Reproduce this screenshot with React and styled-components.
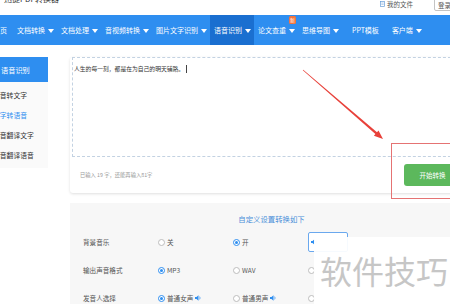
import React from 'react';
import styled, { createGlobalStyle } from 'styled-components';

const Global = createGlobalStyle`
  html, body { margin: 0; padding: 0; background: #fff; }
  body {
    width: 450px; height: 304px; overflow: hidden;
    font-family: "Noto Sans CJK SC", "Noto Sans", sans-serif;
  }
  * { box-sizing: border-box; }
`;

const Page = styled.div`
  position: relative;
  width: 450px;
  height: 304px;
  overflow: hidden;
  background: #fff;
`;

const TopBar = styled.header`
  height: 15px;
  display: flex;
  justify-content: space-between;
  align-items: flex-start;
`;

const Brand = styled.div`
  margin: -6px 0 0 4px;
  font-size: 8px;
  line-height: 10px;
  color: #333;
  white-space: nowrap;
`;

const TopRight = styled.div`
  display: flex;
  align-items: flex-start;
  gap: 21px;
  margin-right: -14px;
`;

const MyFiles = styled.div`
  display: flex;
  align-items: center;
  gap: 2px;
  font-size: 6.5px;
  line-height: 8px;
  color: #555;
  white-space: nowrap;
`;

const LoginBtn = styled.div`
  margin-top: -3px;
  width: 30px;
  height: 14px;
  border: 1px solid #c4c4c4;
  border-radius: 2px;
  font-size: 6.5px;
  line-height: 12px;
  padding-left: 3px;
  padding-top: 1px;
  color: #555;
  background: #fff;
`;

const Nav = styled.nav`
  height: 30px;
  background: #2e8ef0;
  margin-left: -11px;
  white-space: nowrap;
  font-size: 0;
`;

const NavItem = styled.span`
  position: relative;
  display: inline-block;
  vertical-align: top;
  height: 30px;
  padding: 0 ${p => p.$pr ?? 3}px 0 ${p => p.$pl ?? 4}px;
  font-size: 7px;
  line-height: 30px;
  color: #fff;
  background: ${p => (p.$active ? '#1a6fd0' : 'transparent')};
`;

const CaretIcon = styled.svg`
  display: inline-block;
  vertical-align: middle;
  margin-left: 3px;
`;

const Badge = styled.span`
  position: absolute;
  top: 1px;
  right: 2px;
  width: 7px;
  height: 8px;
  border-radius: 1.5px;
  background: #f4733a;
  color: #fff;
  font-size: 5px;
  line-height: 8px;
  text-align: center;
`;

const Body = styled.div`
  display: flex;
  align-items: flex-start;
  padding-top: 12px;
`;

const Sidebar = styled.aside`
  width: 48px;
  flex: none;
`;

const SideHead = styled.div`
  height: 25px;
  background: #2e8ef0;
  color: #fff;
  font-size: 7.2px;
  display: flex;
  align-items: center;
  padding-left: 1px;
  white-space: nowrap;
`;

const SideList = styled.ul`
  margin: 0;
  padding: 3px 0;
  list-style: none;
  background: #fafafa;
  overflow: hidden;
`;

const SideItem = styled.li`
  height: 20px;
  line-height: 20px;
  font-size: 6.8px;
  margin-left: -7px;
  white-space: nowrap;
  color: ${p => (p.$active ? '#2e8ef0' : '#333')};
`;

const Main = styled.main`
  margin-left: 22px;
  width: 403px;
  flex: none;
`;

const Card = styled.section`
  background: #fff;
  border-radius: 3px;
  box-shadow: 0 1px 3px rgba(0, 0, 0, 0.13);
  padding: 0 2px;
`;

const TextBox = styled.div`
  height: 100px;
  border: 1px dashed #c3d2e2;
  padding: 7px 1px;
  font-size: 5.8px;
  line-height: 6px;
  color: #333;
  white-space: nowrap;
`;

const Caret = styled.span`
  display: inline-block;
  width: 0.7px;
  height: 8px;
  margin-left: 1.5px;
  vertical-align: -2px;
  background: #444;
`;

const Footer = styled.div`
  height: 36px;
  display: flex;
  align-items: center;
  justify-content: space-between;
  padding: 0 10px 0 8px;
`;

const Count = styled.span`
  font-size: 5.3px;
  color: #999;
`;

const StartBtn = styled.button`
  width: 57px;
  height: 22px;
  border: none;
  border-radius: 3px;
  background: #5cb85c;
  color: #fff;
  font-family: inherit;
  font-size: 6.5px;
  padding: 0;
`;

const Settings = styled.section`
  margin-top: 10px;
  background: #f7f7f7;
  height: 120px;
  padding-top: 10px;
`;

const SettingsTitle = styled.div`
  text-align: center;
  font-size: 7.4px;
  line-height: 12px;
  color: #4a8fd9;
  margin-bottom: 3px;
`;

const Row = styled.div`
  height: 28px;
  display: flex;
  align-items: center;
  padding-left: 13px;
`;

const Label = styled.span`
  width: 75px;
  font-size: 6.6px;
  color: #555;
`;

const Option = styled.label`
  width: 75px;
  display: flex;
  align-items: center;
  gap: 2px;
  font-size: 6.6px;
  color: #555;
  white-space: nowrap;
`;

const Radio = styled.span`
  position: relative;
  width: 7px;
  height: 7px;
  border-radius: 50%;
  background: #fff;
  border: 0.8px solid ${p => (p.$checked ? '#2e8ef0' : '#bdbdbd')};
  &::after {
    content: '';
    display: ${p => (p.$checked ? 'block' : 'none')};
    position: absolute;
    left: 1.3px;
    top: 1.3px;
    width: 3px;
    height: 3px;
    border-radius: 50%;
    background: #2e8ef0;
  }
`;

const SelectBox = styled.div`
  width: 40px;
  height: 20px;
  border: 1px solid #6aa8ee;
  border-radius: 2px;
  background: #fff;
  display: flex;
  align-items: center;
  padding-left: 2px;
`;

const Watermark = styled.div`
  position: absolute;
  left: 314px;
  top: 237px;
  right: 0;
  bottom: 0;
  background: rgba(255, 255, 255, 0.94);
  padding: 13px 0 0 6px;
  font-size: 32px;
  line-height: 40px;
  color: #c6c6c6;
  white-space: nowrap;
`;

const RedBox = styled.div`
  position: absolute;
  left: 391px;
  top: 143px;
  width: 70px;
  height: 56px;
  border: 1px solid #e57373;
`;

const ArrowSvg = styled.svg`
  position: absolute;
  left: 0;
  top: 0;
  pointer-events: none;
`;

const Caretdown = () => (
  <CaretIcon width="6" height="4" viewBox="0 0 6 4"><polygon points="0,0 6,0 3,4" fill="#fff" /></CaretIcon>
);

const Speaker = () => (
  <svg width="7" height="6" viewBox="0 0 7 6">
    <polygon points="0,2 1.5,2 3.5,0.3 3.5,5.7 1.5,4 0,4" fill="#2e8ef0" />
    <path d="M4.6 1.6 Q5.6 3 4.6 4.4" stroke="#2e8ef0" strokeWidth="0.7" fill="none" />
  </svg>
);

const FileIcon = () => (
  <svg width="5" height="6" viewBox="0 0 5 6">
    <rect x="0.4" y="0.4" width="4.2" height="5.2" fill="none" stroke="#6a9fd8" strokeWidth="0.7" />
    <line x1="1.3" y1="2" x2="3.7" y2="2" stroke="#6a9fd8" strokeWidth="0.5" />
    <line x1="1.3" y1="3.4" x2="3.7" y2="3.4" stroke="#6a9fd8" strokeWidth="0.5" />
  </svg>
);

const navItems = [
  { t: '首页', caret: false, pr: 6 },
  { t: '文档转换' },
  { t: '文档处理' },
  { t: '音视频转换' },
  { t: '图片文字识别' },
  { t: '语音识别', active: true },
  { t: '论文查重', badge: true },
  { t: '思维导图' },
  { t: 'PPT模板', caret: false, pl: 10, pr: 9 },
  { t: '客户端' },
];

export default function App() {
  return (
    <Page>
      <Global />
      <TopBar>
        <Brand>迅捷PDF转换器</Brand>
        <TopRight>
          <MyFiles><FileIcon />我的文件</MyFiles>
          <LoginBtn>登录</LoginBtn>
        </TopRight>
      </TopBar>
      <Nav>
        {navItems.map(it => (
          <NavItem key={it.t} $active={it.active} $pl={it.pl} $pr={it.pr}>
            {it.t}
            {it.caret !== false && <Caretdown />}
            {it.badge && <Badge>新</Badge>}
          </NavItem>
        ))}
      </Nav>
      <Body>
        <Sidebar>
          <SideHead>语音识别</SideHead>
          <SideList>
            <SideItem>语音转文字</SideItem>
            <SideItem $active>文字转语音</SideItem>
            <SideItem>语音翻译文字</SideItem>
            <SideItem>语音翻译语音</SideItem>
          </SideList>
        </Sidebar>
        <Main>
          <Card>
            <TextBox>
              人生的每一刻，都是在为自己的明天铺路。<Caret />
            </TextBox>
            <Footer>
              <Count>已输入 19 字，还能再输入81字</Count>
              <StartBtn>开始转换</StartBtn>
            </Footer>
          </Card>
          <Settings>
            <SettingsTitle>自定义设置转换如下</SettingsTitle>
            <Row>
              <Label>背景音乐</Label>
              <Option><Radio />关</Option>
              <Option><Radio $checked />开</Option>
              <SelectBox><Speaker /></SelectBox>
            </Row>
            <Row>
              <Label>输出声音格式</Label>
              <Option><Radio $checked />MP3</Option>
              <Option><Radio />WAV</Option>
              <Option><Radio /></Option>
            </Row>
            <Row>
              <Label>发音人选择</Label>
              <Option><Radio $checked />普通女声<Speaker /></Option>
              <Option><Radio />普通男声<Speaker /></Option>
              <Option><Radio /></Option>
            </Row>
          </Settings>
        </Main>
      </Body>
      <ArrowSvg width="450" height="304" viewBox="0 0 450 304">
        <polygon
          points="303.2,69.8 377,132.2 378.5,130.5 383,139 373.9,135.8 375.4,134 302.8,70.2"
          fill="#e8413a"
        />
      </ArrowSvg>
      <RedBox />
      <Watermark>软件技巧</Watermark>
    </Page>
  );
}
